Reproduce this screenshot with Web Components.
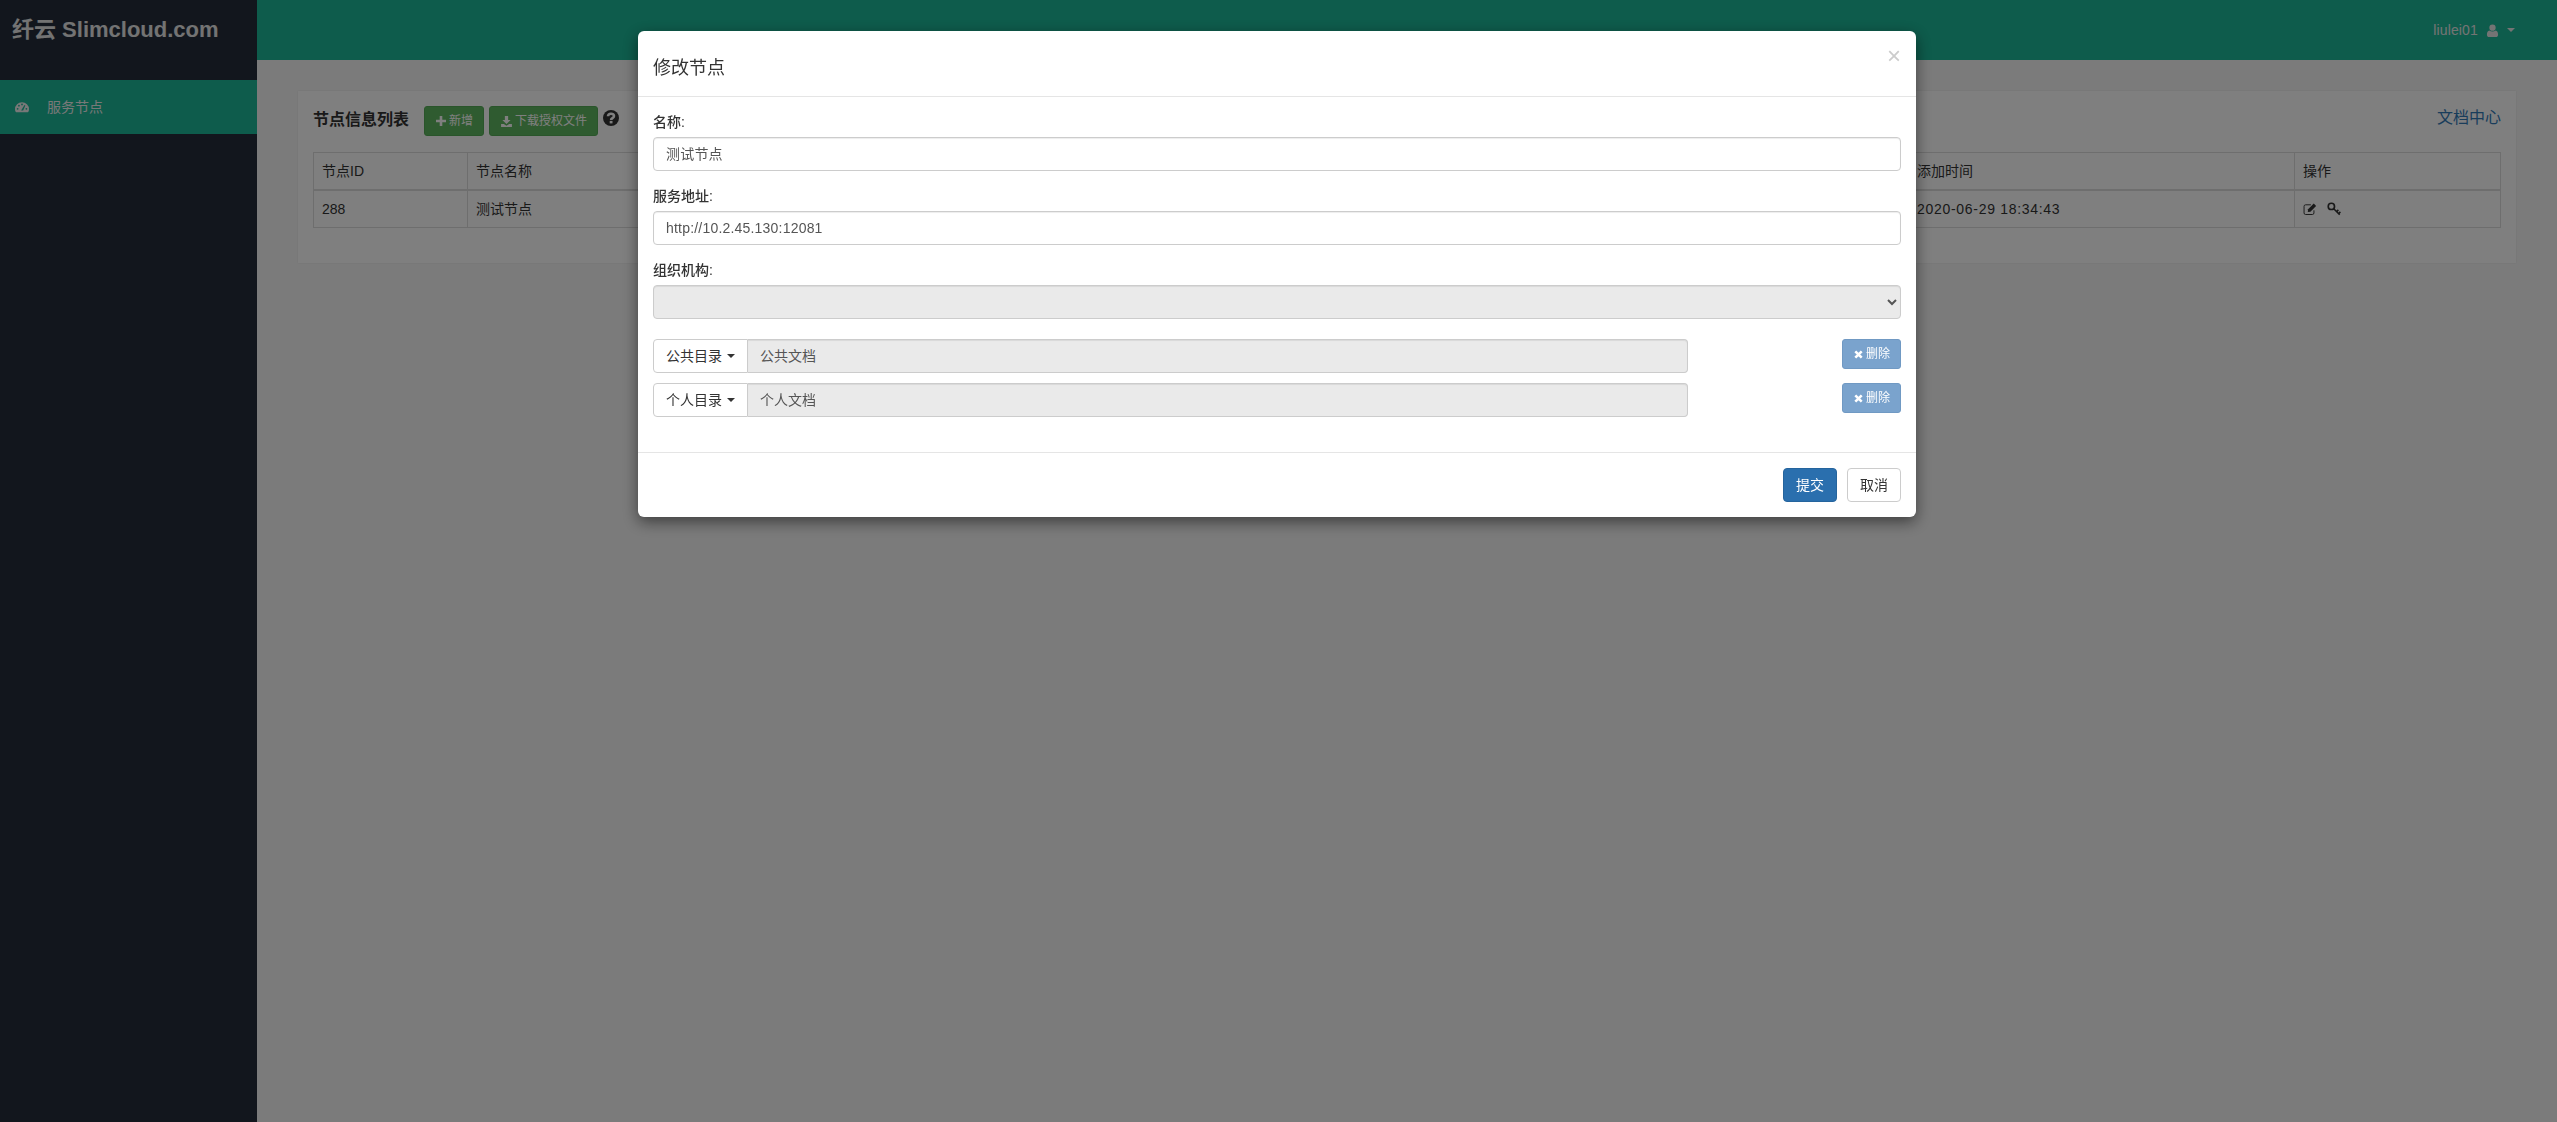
<!DOCTYPE html>
<html lang="zh">
<head>
<meta charset="utf-8">
<title>服务节点</title>
<style>
    html, body {
        margin: 0;
        height: 100%;
        overflow: hidden;
        font-family: "Liberation Sans", "Noto Sans CJK SC", sans-serif;
        font-size: 14px;
        line-height: 20px;
        color: #333;
    }
</style>
</head>
<body>
<sk-app>
    <sk-sidebar slot="side" brand="纤云 Slimcloud.com">
        <sk-menu-item icon="tachometer">服务节点</sk-menu-item>
    </sk-sidebar>
    <sk-topbar slot="top" user="liulei01"></sk-topbar>
    <sk-node-card slot="main"></sk-node-card>
</sk-app>

<sk-modal title="修改节点">
    <sk-field label="名称:">测试节点</sk-field>
    <sk-field label="服务地址:">http://10.2.45.130:12081</sk-field>
    <sk-field label="组织机构:" type="select"></sk-field>
    <sk-dir-row class="first" kind="公共目录">公共文档</sk-dir-row>
    <sk-dir-row kind="个人目录">个人文档</sk-dir-row>
    <sk-btn slot="footer" variant="primary" size="md">提交</sk-btn>
    <sk-btn slot="footer" variant="default" size="md">取消</sk-btn>
</sk-modal>

<script>
//svg bodies of the icons, all drawn with currentColor
const ICONS = {
    tachometer: `<svg viewBox="0 0 16 13"><path fill="currentColor" d="M8 1a8 8 0 0 0-8 8c0 1.300.3 2.400.7 3 .2.300.4.400.7.400h13.200c.3 0 .5-.1.700-.4.4-.6.700-1.700.700-3a8 8 0 0 0-8-8z"/><g fill="var(--icon-hole, #1cb898)"><circle cx="3" cy="8.500" r="1"/><circle cx="4.500" cy="5" r="1"/><circle cx="8" cy="3.500" r="1"/><circle cx="13" cy="8.500" r="1"/><path d="M10.800 4.300 11.800 4.800 9.300 10.400 7 10.400z"/></g></svg>`,
    plus: `<svg viewBox="0 0 12 12"><path fill="currentColor" d="M4.700 1h2.600v3.700H11v2.600H7.300V11H4.700V7.300H1V4.700h3.700z"/></svg>`,
    download: `<svg viewBox="0 0 12 12"><path fill="currentColor" d="M4.500 1h3v3.500h2.300L6 8.300 2.200 4.500h2.300zM1 8.300h2.500L6 10l2.500-1.700H11V11H1z"/></svg>`,
    question: `<svg viewBox="0 0 16 16"><circle cx="8" cy="8" r="8" fill="currentColor"/><path fill="none" stroke="#fff" stroke-width="2.600" d="M5 6.300C5.100 4.500 6.400 3.700 8 3.700c1.800 0 3 .9 3 2.400 0 2-2.900 2-2.900 3.800"/><rect x="6.700" y="10.900" width="2.800" height="2.500" fill="#fff"/></svg>`,
    remove: `<svg viewBox="0 0 12 12"><path fill="none" stroke="currentColor" stroke-width="2.800" d="M2.500 2.500l7 7M9.500 2.500l-7 7"/></svg>`,
    user: `<svg viewBox="0 0 12 14"><circle cx="6" cy="4" r="3.400" fill="currentColor"/><path fill="currentColor" d="M2.600 7c1 .8 2.100 1.100 3.400 1.100S8.400 7.800 9.400 7C11 7.300 12 8.800 12 11.500c0 1.500-1 2.500-2.400 2.500H2.400C1 14 0 13 0 11.500 0 8.800 1 7.300 2.600 7z"/></svg>`,
    edit: `<svg viewBox="0 0 16 16"><path fill="none" stroke="currentColor" stroke-width="1.100" d="M12.500 9.500v3a1.800 1.800 0 0 1-1.800 1.800H3A1.800 1.800 0 0 1 1.200 12.500V5A1.800 1.800 0 0 1 3 3.200h6"/><path fill="currentColor" d="M5.800 8.300 12.300 1.800 15 4.500 8.500 11 5.500 11.500z"/></svg>`,
    key: `<svg viewBox="0 0 16 16"><g fill="none" stroke="currentColor"><circle cx="5" cy="5" r="3.600" stroke-width="1.900"/><path stroke-width="1.800" d="M7.700 7.700 14.500 14.500M11 11 13 9M13.300 13.300 15.300 11.300"/></g></svg>`
};

/*
class SkIcon
draws one icon out of ICONS
attributes: name, size (px)
*/
class SkIcon extends HTMLElement {
    constructor() {
        super();
        let size = this.getAttribute('size') || 12;
        let shadowRoot = this.attachShadow({mode: 'open'});
        shadowRoot.innerHTML = `
            <style>
                :host { display: inline-flex; flex: none; width: ${size}px; height: ${size}px; }
                svg { display: block; width: 100%; height: 100%; }
            </style>
            ${ICONS[this.getAttribute('name')]}
        `;
    }
}
customElements.define('sk-icon', SkIcon);

/*
class SkApp
page frame: sidebar column, top bar, main area
*/
class SkApp extends HTMLElement {
    constructor() {
        super();
        let shadowRoot = this.attachShadow({mode: 'open'});
        shadowRoot.innerHTML = `
            <style>
                :host {
                    display: grid;
                    grid-template-columns: 257px 1fr;
                    grid-template-rows: 60px 1fr;
                    height: 1122px;
                    background: #f7f7f7;
                }
                .side { grid-row: 1 / 3; display: flex; }
                .main { padding: 31px 41px; }
            </style>
            <div class="side"><slot name="side"></slot></div>
            <slot name="top"></slot>
            <div class="main"><slot name="main"></slot></div>
        `;
    }
}
customElements.define('sk-app', SkApp);

//sidebar with the brand on top
class SkSidebar extends HTMLElement {
    constructor() {
        super();
        let shadowRoot = this.attachShadow({mode: 'open'});
        shadowRoot.innerHTML = `
            <style>
                :host { display: block; flex: 1; background: #252d3b; }
                .brand {
                    height: 80px;
                    padding-left: 12px;
                    font-size: 22px;
                    font-weight: 700;
                    line-height: 60px;
                    color: #e6e6e6;
                    white-space: nowrap;
                }
            </style>
            <div class="brand">${this.getAttribute('brand')}</div>
            <slot></slot>
        `;
    }
}
customElements.define('sk-sidebar', SkSidebar);

//one row of the sidebar menu
class SkMenuItem extends HTMLElement {
    constructor() {
        super();
        let shadowRoot = this.attachShadow({mode: 'open'});
        shadowRoot.innerHTML = `
            <style>
                :host {
                    display: flex;
                    align-items: center;
                    height: 54px;
                    padding-left: 15px;
                    background: #1cb898;
                    color: #f0f0f0;
                    font-size: 14px;
                }
                sk-icon { margin-right: 18px; }
            </style>
            <sk-icon name="${this.getAttribute('icon')}" size="14"></sk-icon>
            <slot></slot>
        `;
    }
}
customElements.define('sk-menu-item', SkMenuItem);

//top bar with the user menu on the right
class SkTopbar extends HTMLElement {
    constructor() {
        super();
        let shadowRoot = this.attachShadow({mode: 'open'});
        shadowRoot.innerHTML = `
            <style>
                :host {
                    display: flex;
                    align-items: center;
                    justify-content: flex-end;
                    padding-right: 42px;
                    background: #1cb898;
                    color: #e8e8e8;
                }
                span { letter-spacing: .15px; }
                sk-icon { margin: 0 8px; }
                i {
                    width: 0;
                    height: 0;
                    border: 4.500px solid transparent;
                    border-bottom-width: 0;
                    border-top-color: currentColor;
                }
            </style>
            <span>${this.getAttribute('user')}</span>
            <sk-icon name="user" size="13"></sk-icon>
            <i></i>
        `;
    }
}
customElements.define('sk-topbar', SkTopbar);

/*
class SkBtn
bootstrap like button
attributes: variant (success|primary|default|danger), size (sm|md), icon, icon-size
*/
class SkBtn extends HTMLElement {
    constructor() {
        super();
        let icon = this.getAttribute('icon');
        let shadowRoot = this.attachShadow({mode: 'open'});
        shadowRoot.innerHTML = `
            <style>
                :host {
                    display: inline-flex;
                    align-items: center;
                    box-sizing: border-box;
                    height: 30px;
                    padding: 0 10px;
                    border: 1px solid transparent;
                    border-radius: 3px;
                    font-size: 12px;
                    white-space: nowrap;
                }
                :host([size=md]) { height: 34px; padding: 0 12px; border-radius: 4px; font-size: 14px; }
                :host([variant=success]) { background: #5fb761; border-color: #55ab57; color: #fff; }
                :host([variant=primary]) { background: #2a6fae; border-color: #25649d; color: #fff; }
                :host([variant=default]) { background: #fff; border-color: #ccc; color: #333; }
                :host([variant=danger]) { background: #7aa3cd; border-color: #7099c3; color: #fff; }
                sk-icon { margin-right: 2px; }
            </style>
            ${icon ? `<sk-icon name="${icon}" size="${this.getAttribute('icon-size') || 12}"></sk-icon>` : ''}
            <slot></slot>
        `;
    }
}
customElements.define('sk-btn', SkBtn);

//list of the nodes, sits in a white card
class SkNodeCard extends HTMLElement {
    constructor() {
        super();
        let shadowRoot = this.attachShadow({mode: 'open'});
        shadowRoot.innerHTML = `
            <style>
                :host {
                    display: block;
                    padding: 15px 15px 35px;
                    background: #fff;
                    box-shadow: 0 0 2px rgba(0,0,0,.08);
                }
                .head { display: flex; align-items: center; gap: 5px; height: 30px; margin-bottom: 16px; }
                h2 { margin: 0 10px 0 0; font-size: 16px; line-height: 30px; font-weight: 700; margin-top: -3px; }
                .help { margin-top: -6px; }
                a { margin: -7px 0 0 auto; font-size: 16px; color: #337ab7; text-decoration: none; }
                table {
                    table-layout: fixed;
                    width: 100%;
                    border-collapse: collapse;
                }
                th, td {
                    padding: 8px;
                    border: 1px solid #ddd;
                    font-weight: 400;
                    text-align: left;
                    overflow: hidden;
                    white-space: nowrap;
                }
                th { border-bottom-width: 2px; }
                .time { letter-spacing: .7px; }
                .ops { display: flex; gap: 10px; align-items: center; height: 20px; }
            </style>
            <div class="head">
                <h2>节点信息列表</h2>
                <sk-btn variant="success" icon="plus">新增</sk-btn>
                <sk-btn variant="success" icon="download" icon-size="13">下载授权文件</sk-btn>
                <sk-icon class="help" name="question" size="16"></sk-icon>
                <a href="#">文档中心</a>
            </div>
            <table>
                <colgroup>
                    <col style="width:154px"><col style="width:1441px"><col style="width:386px"><col>
                </colgroup>
                <thead>
                    <tr><th>节点ID</th><th>节点名称</th><th>添加时间</th><th>操作</th></tr>
                </thead>
                <tbody>
                    <tr>
                        <td>288</td>
                        <td>测试节点</td>
                        <td class="time">2020-06-29 18:34:43</td>
                        <td><div class="ops"><sk-icon name="edit" size="14"></sk-icon><sk-icon name="key" size="14"></sk-icon></div></td>
                    </tr>
                </tbody>
            </table>
        `;
    }
}
customElements.define('sk-node-card', SkNodeCard);

/*
class SkField
label with a text box or a select under it
attributes: label, type (select for a disabled select)
*/
class SkField extends HTMLElement {
    constructor() {
        super();
        let control = this.getAttribute('type') === 'select'
            ? '<select disabled><option></option></select>'
            : '<div class="input"><slot></slot></div>';
        let shadowRoot = this.attachShadow({mode: 'open'});
        shadowRoot.innerHTML = `
            <style>
                :host { display: block; margin-bottom: 15px; }
                label { display: block; margin-bottom: 5px; font-weight: 500; color: #333; }
                .input, select {
                    display: block;
                    box-sizing: border-box;
                    width: 100%;
                    height: 34px;
                    padding: 6px 12px;
                    border: 1px solid #ccc;
                    border-radius: 4px;
                    background-color: #fff;
                    color: #555;
                    font: inherit;
                    letter-spacing: .2px;
                    box-shadow: inset 0 1px 1px rgba(0,0,0,.075);
                }
                select { background-color: #eaeaea; opacity: 1; padding: 6px 3px; }
            </style>
            <label>${this.getAttribute('label')}</label>
            ${control}
        `;
    }
}
customElements.define('sk-field', SkField);

//directory row: kind dropdown, disabled name and a delete button at the far right
class SkDirRow extends HTMLElement {
    constructor() {
        super();
        let shadowRoot = this.attachShadow({mode: 'open'});
        shadowRoot.innerHTML = `
            <style>
                :host { display: flex; justify-content: space-between; align-items: flex-start; margin-bottom: 10px; }
                :host(.first) { margin-top: 20px; }
                .group { display: flex; width: 1035px; height: 34px; box-sizing: border-box; }
                .kind {
                    display: flex;
                    align-items: center;
                    box-sizing: border-box;
                    width: 95px;
                    padding-left: 12px;
                    border: 1px solid #ccc;
                    border-radius: 4px 0 0 4px;
                    background: #fff;
                    color: #333;
                }
                .kind i {
                    margin-left: 5px;
                    border: 4px solid transparent;
                    border-bottom-width: 0;
                    border-top-color: currentColor;
                }
                .name {
                    flex: 1;
                    box-sizing: border-box;
                    padding: 6px 12px;
                    border: 1px solid #ccc;
                    border-left: 0;
                    border-radius: 0 4px 4px 0;
                    background: #eaeaea;
                    color: #555;
                    box-shadow: inset 0 1px 1px rgba(0,0,0,.075);
                }
            </style>
            <div class="group">
                <div class="kind">${this.getAttribute('kind')}<i></i></div>
                <div class="name"><slot></slot></div>
            </div>
            <sk-btn variant="danger" icon="remove" icon-size="11">删除</sk-btn>
        `;
    }
}
customElements.define('sk-dir-row', SkDirRow);

/*
class SkModal
dialog with its backdrop, lies over the whole page
attributes: title
slots: default (body), footer
*/
class SkModal extends HTMLElement {
    constructor() {
        super();
        let shadowRoot = this.attachShadow({mode: 'open'});
        shadowRoot.innerHTML = `
            <style>
                :host { display: block; }
                .backdrop { position: fixed; inset: 0; background: rgba(0,0,0,.5); }
                .dialog {
                    position: fixed;
                    left: 638px;
                    top: 31px;
                    width: 1278px;
                    background: #fff;
                    border-radius: 6px;
                    box-shadow: 0 5px 15px rgba(0,0,0,.5);
                }
                header {
                    position: relative;
                    padding: 24px 15px 15px;
                    border-bottom: 1px solid #e5e5e5;
                }
                h4 { margin: 0; font-size: 18px; line-height: 26px; font-weight: 400; color: #333; }
                .close {
                    position: absolute;
                    right: 15px;
                    top: 10px;
                    font-size: 24px;
                    line-height: 30px;
                    font-weight: 400;
                    color: #ccc;
                }
                main { padding: 15px 15px 25px; }
                footer {
                    display: flex;
                    justify-content: flex-end;
                    gap: 10px;
                    padding: 15px;
                    border-top: 1px solid #e5e5e5;
                }
            </style>
            <div class="backdrop"></div>
            <div class="dialog">
                <header>
                    <h4>${this.getAttribute('title')}</h4>
                    <span class="close">×</span>
                </header>
                <main><slot></slot></main>
                <footer><slot name="footer"></slot></footer>
            </div>
        `;
    }
}
customElements.define('sk-modal', SkModal);
</script>
</body>
</html>
